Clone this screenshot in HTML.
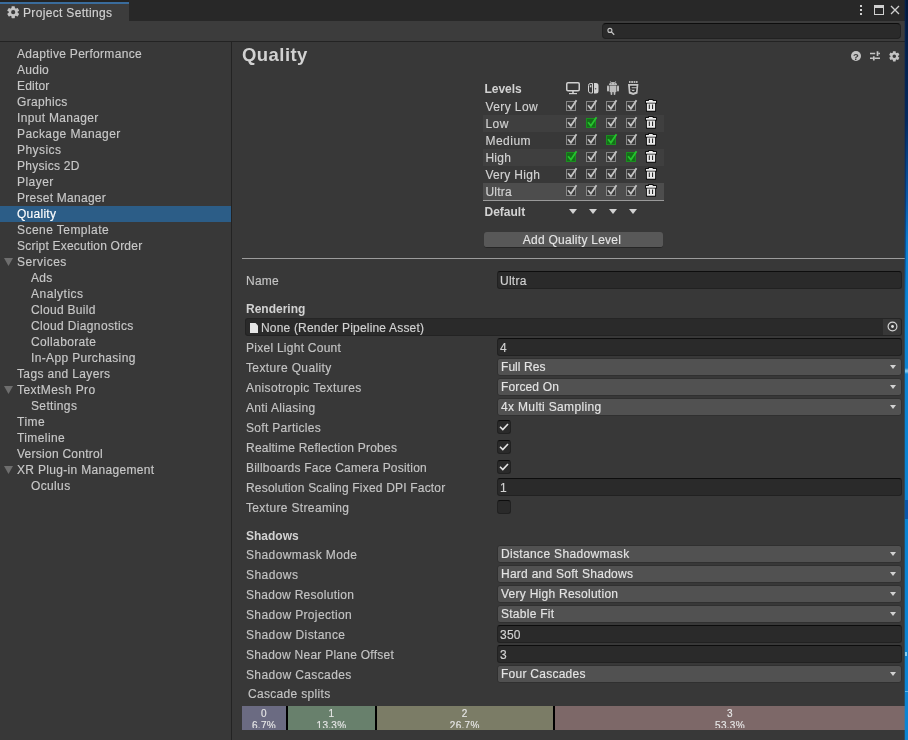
<!DOCTYPE html>
<html><head><meta charset="utf-8"><title>Project Settings</title>
<style>
html,body{margin:0;padding:0;}
body{width:908px;height:740px;overflow:hidden;background:#383838;position:relative;
 font-family:"Liberation Sans",sans-serif;font-size:12px;color:#c8c8c8;letter-spacing:0.26px;-webkit-text-stroke:0.15px currentColor;}
div,span{box-sizing:border-box;}
.abs{position:absolute;}
.t{position:absolute;white-space:nowrap;line-height:16px;height:16px;}
.b{font-weight:bold;letter-spacing:0;-webkit-text-stroke:0;}
.row{position:absolute;left:0;width:231px;height:16px;line-height:16px;white-space:nowrap;}
.lbl{position:absolute;left:246px;height:18px;line-height:18px;white-space:nowrap;color:#c4c4c4;}
.tf{position:absolute;left:497px;width:405px;height:18px;background:#2a2a2a;border:1px solid #212121;border-top-color:#0d0d0d;border-radius:3px;line-height:18px;padding-left:2px;color:#d2d2d2;white-space:nowrap;}
.dd{position:absolute;left:497px;width:405px;height:18px;background:#515151;border:1px solid #303030;border-radius:3px;line-height:17px;padding-left:3px;color:#e4e4e4;white-space:nowrap;}
.dd:after{content:"";position:absolute;right:5.2px;top:6.4px;border-left:3.8px solid transparent;border-right:3.8px solid transparent;border-top:4.5px solid #d2d2d2;}
.cb{position:absolute;left:497px;width:14px;height:14px;background:#2a2a2a;border:1px solid #212121;border-top-color:#0d0d0d;border-radius:3px;}
.cb svg{position:absolute;left:-1px;top:-1px;}
.lv{position:absolute;left:483px;width:181px;height:17px;}
.lv span{position:absolute;left:2.4px;top:1px;line-height:17px;color:#d2d2d2;}
svg{display:block;overflow:visible;}
</style></head><body><div id="win" style="position:absolute;left:0;top:0;width:908px;height:740px;will-change:transform">
<svg width="0" height="0" style="position:absolute">
<defs>
<symbol id="chk" viewBox="0 0 14 14" overflow="visible">
 <rect x="0.5" y="1.5" width="9" height="9" fill="#3a3a3a" stroke="#888888" stroke-width="1"/>
 <path d="M2.1 5.3 L4.9 8.7 L10.5 0.3" fill="none" stroke="#c4c4c4" stroke-width="1.8"/>
</symbol>
<symbol id="chkg" viewBox="0 0 14 14" overflow="visible">
 <rect x="0.5" y="1.5" width="9" height="9" fill="#146f18" stroke="#1b8f20" stroke-width="1"/>
 <path d="M2.1 5.3 L4.9 8.7 L10.5 0.3" fill="none" stroke="#27c32f" stroke-width="1.8"/>
</symbol>
<symbol id="trash" viewBox="0 0 12 13" overflow="visible">
 <path d="M1 1.8 H3.8 V0.9 H7.8 V1.8 H11 V3.9 H10.2 V11.8 H1.8 V3.9 H1 Z" fill="#0c0c0c" stroke="#0c0c0c" stroke-width="1.7" stroke-linejoin="round"/>
 <path d="M1 1.9 H3.9 V1 H7.7 V1.9 H11 V3.8 H1 Z" fill="#e9e9e9"/>
 <path d="M1.9 4.5 H10.1 V11.3 Q10.1 11.8 9.6 11.8 H2.4 Q1.9 11.8 1.9 11.3 Z" fill="#e9e9e9"/>
 <path d="M4.3 5.5 V10 M7.6 5.5 V10" stroke="#151515" stroke-width="1"/>
</symbol>
<symbol id="tri" viewBox="0 0 8 5"><path d="M0 0 H8 L4 5 Z" fill="#d2d2d2"/></symbol>
<symbol id="gear" viewBox="-6.5 -6.5 13 13" overflow="visible">
 <g fill="#c4c4c4"><rect x="-1.75" y="-6.3" width="3.5" height="3" rx="0.5" transform="rotate(0)"/><rect x="-1.75" y="-6.3" width="3.5" height="3" rx="0.5" transform="rotate(60)"/><rect x="-1.75" y="-6.3" width="3.5" height="3" rx="0.5" transform="rotate(120)"/><rect x="-1.75" y="-6.3" width="3.5" height="3" rx="0.5" transform="rotate(180)"/><rect x="-1.75" y="-6.3" width="3.5" height="3" rx="0.5" transform="rotate(240)"/><rect x="-1.75" y="-6.3" width="3.5" height="3" rx="0.5" transform="rotate(300)"/>
  <path fill-rule="evenodd" d="M-4.7,0 a4.7,4.7 0 1,0 9.4,0 a4.7,4.7 0 1,0 -9.4,0 Z M-2.2,0 a2.2,2.2 0 1,0 4.4,0 a2.2,2.2 0 1,0 -4.4,0 Z"/>
 </g>
</symbol>
</defs></svg>

<div class="abs" style="left:0;top:0;width:905px;height:21px;background:#282828"></div>
<div class="abs" style="left:0;top:0;width:129px;height:2px;background:#232323"></div>
<div class="abs" style="left:0;top:2px;width:129px;height:19px;background:#3c3c3c"></div>
<div class="abs" style="left:0;top:2px;width:129px;height:2px;background:#3a6c9c"></div>
<svg class="abs" style="left:6.8px;top:5.8px" width="12.4" height="12.4"><use href="#gear"/></svg>
<div class="t" style="left:23px;top:5px;color:#d2d2d2;letter-spacing:0.33px">Project Settings</div>
<div class="abs" style="left:860px;top:5px;width:2px;height:2px;background:#d0d0d0"></div>
<div class="abs" style="left:860px;top:9px;width:2px;height:2px;background:#d0d0d0"></div>
<div class="abs" style="left:860px;top:13px;width:2px;height:2px;background:#d0d0d0"></div>
<div class="abs" style="left:874px;top:5px;width:10px;height:10px;border:1px solid #d0d0d0;border-top-width:3px"></div>
<svg class="abs" style="left:891px;top:6px" width="8" height="8"><path d="M0 0 L8 8 M8 0 L0 8" stroke="#d0d0d0" stroke-width="1.3"/></svg>
<div class="abs" style="left:0;top:21px;width:905px;height:20px;background:#3c3c3c"></div>
<div class="abs" style="left:0;top:41px;width:905px;height:1px;background:#232323"></div>
<div class="abs" style="left:602px;top:23px;width:299px;height:16px;background:#2a2a2a;border:1px solid #212121;border-top-color:#0d0d0d;border-radius:4px"></div>
<svg class="abs" style="left:607px;top:27px" width="9" height="9"><circle cx="2.9" cy="3.4" r="2" fill="none" stroke="#c4c4c4" stroke-width="1.1"/><path d="M4.4 4.9 L7.2 7.7" stroke="#c4c4c4" stroke-width="1.3"/></svg>
<div class="abs" style="left:231px;top:42px;width:1px;height:698px;background:#232323"></div>
<div class="row" style="top:46px;"><span class="abs" style="left:17px;letter-spacing:0.31px">Adaptive Performance</span></div>
<div class="row" style="top:62px;"><span class="abs" style="left:17px">Audio</span></div>
<div class="row" style="top:78px;"><span class="abs" style="left:17px;letter-spacing:0.18px">Editor</span></div>
<div class="row" style="top:94px;"><span class="abs" style="left:17px;letter-spacing:0.33px">Graphics</span></div>
<div class="row" style="top:110px;"><span class="abs" style="left:17px;letter-spacing:0.32px">Input Manager</span></div>
<div class="row" style="top:126px;"><span class="abs" style="left:17px;letter-spacing:0.42px">Package Manager</span></div>
<div class="row" style="top:142px;"><span class="abs" style="left:17px;letter-spacing:0.43px">Physics</span></div>
<div class="row" style="top:158px;"><span class="abs" style="left:17px">Physics 2D</span></div>
<div class="row" style="top:174px;"><span class="abs" style="left:17px;letter-spacing:0.46px">Player</span></div>
<div class="row" style="top:190px;"><span class="abs" style="left:17px">Preset Manager</span></div>
<div class="row" style="top:206px;background:#2c5d87;color:#ffffff;"><span class="abs" style="left:17px">Quality</span></div>
<div class="row" style="top:222px;"><span class="abs" style="left:17px;letter-spacing:0.45px">Scene Template</span></div>
<div class="row" style="top:238px;"><span class="abs" style="left:17px;letter-spacing:0.21px">Script Execution Order</span></div>
<div class="row" style="top:254px;"><svg class="abs" style="left:4px;top:4px" width="9" height="8"><path d="M0 0 H9 L4.5 8 Z" fill="#6e6e6e"/></svg><span class="abs" style="left:17px;letter-spacing:0.47px">Services</span></div>
<div class="row" style="top:270px;"><span class="abs" style="left:31px">Ads</span></div>
<div class="row" style="top:286px;"><span class="abs" style="left:31px;letter-spacing:0.51px">Analytics</span></div>
<div class="row" style="top:302px;"><span class="abs" style="left:31px;letter-spacing:0.31px">Cloud Build</span></div>
<div class="row" style="top:318px;"><span class="abs" style="left:31px;letter-spacing:0.35px">Cloud Diagnostics</span></div>
<div class="row" style="top:334px;"><span class="abs" style="left:31px;letter-spacing:0.36px">Collaborate</span></div>
<div class="row" style="top:350px;"><span class="abs" style="left:31px;letter-spacing:0.35px">In-App Purchasing</span></div>
<div class="row" style="top:366px;"><span class="abs" style="left:17px;letter-spacing:0.36px">Tags and Layers</span></div>
<div class="row" style="top:382px;"><svg class="abs" style="left:4px;top:4px" width="9" height="8"><path d="M0 0 H9 L4.5 8 Z" fill="#6e6e6e"/></svg><span class="abs" style="left:17px;letter-spacing:0.44px">TextMesh Pro</span></div>
<div class="row" style="top:398px;"><span class="abs" style="left:31px;letter-spacing:0.36px">Settings</span></div>
<div class="row" style="top:414px;"><span class="abs" style="left:17px;letter-spacing:0.5px">Time</span></div>
<div class="row" style="top:430px;"><span class="abs" style="left:17px;letter-spacing:0.4px">Timeline</span></div>
<div class="row" style="top:446px;"><span class="abs" style="left:17px">Version Control</span></div>
<div class="row" style="top:462px;"><svg class="abs" style="left:4px;top:4px" width="9" height="8"><path d="M0 0 H9 L4.5 8 Z" fill="#6e6e6e"/></svg><span class="abs" style="left:17px;letter-spacing:0.32px">XR Plug-in Management</span></div>
<div class="row" style="top:478px;"><span class="abs" style="left:31px;letter-spacing:0.36px">Oculus</span></div>
<div class="t b" style="left:242px;top:43px;font-size:18.5px;line-height:24px;height:24px;color:#d2d2d2;letter-spacing:0.45px">Quality</div>
<svg class="abs" style="left:851px;top:50.8px" width="10" height="10"><circle cx="5" cy="5" r="5" fill="#c4c4c4"/><text x="5" y="8.6" font-size="9.5" font-weight="bold" text-anchor="middle" fill="#383838" font-family="Liberation Sans" letter-spacing="0">?</text></svg>
<svg class="abs" style="left:870px;top:51px" width="10" height="10"><path d="M0 2.6 H5.2 M8.2 2.6 H10 M0 7.2 H2.9 M4.4 7.2 H10" stroke="#c4c4c4" stroke-width="1.5"/><path d="M7.5 0.3 V4.9 M3.8 5.2 V9.6" stroke="#c4c4c4" stroke-width="1.7"/></svg>
<svg class="abs" style="left:888.6px;top:50.7px" width="10.6" height="10.6"><use href="#gear"/></svg>
<div class="t b" style="left:484.4px;top:81px;line-height:17px;height:17px;color:#d2d2d2">Levels</div>
<svg class="abs" style="left:566px;top:82px" width="14" height="13"><rect x="0.75" y="0.75" width="12.5" height="8" rx="1.2" fill="none" stroke="#d0d0d0" stroke-width="1.5"/><path d="M7 9 V11.5" stroke="#d0d0d0" stroke-width="1.6"/><path d="M3 11.6 H11" stroke="#d0d0d0" stroke-width="1.2"/></svg>
<svg class="abs" style="left:588px;top:83px" width="11" height="11"><path d="M4.5 0.5 H2.5 A2 2 0 0 0 0.5 2.5 V8 A2 2 0 0 0 2.5 10 H4.5 Z" fill="none" stroke="#d0d0d0" stroke-width="1"/><rect x="1.8" y="2.3" width="1.6" height="2" fill="#d0d0d0"/><path d="M6 0 H8 A2.5 2.5 0 0 1 10.5 2.5 V8 A2.5 2.5 0 0 1 8 10.5 H6 Z" fill="#d0d0d0"/><circle cx="7.6" cy="5.8" r="0.8" fill="#555"/></svg>
<svg class="abs" style="left:607px;top:81px" width="12" height="14"><g fill="#bcbcbc"><path d="M2 4 A4 3 0 0 1 10 4 Z"/><path d="M2.6 4.5 H9.4 V10.4 Q9.4 11.1 8.7 11.1 H3.3 Q2.6 11.1 2.6 10.4 Z"/><rect x="0" y="4.5" width="2" height="5.9" rx="0.9"/><rect x="10" y="4.5" width="2" height="5.9" rx="0.9"/><rect x="3.6" y="10.5" width="1.7" height="3.5" rx="0.8"/><rect x="6.7" y="10.5" width="1.7" height="3.5" rx="0.8"/><path d="M3.1 0 L4.1 1.7 M8.9 0 L7.9 1.7" stroke="#bcbcbc" stroke-width="0.6"/></g><circle cx="4.3" cy="2.7" r="0.45" fill="#505050"/><circle cx="7.7" cy="2.7" r="0.45" fill="#505050"/></svg>
<svg class="abs" style="left:628px;top:81px" width="11" height="14"><path d="M1 0 H2.6 V2 H1 Z M3.2 0 H5 V2 H3.2 Z M5.6 0 H7.4 V2 H5.6 Z M8 0 H9.6 V2 H8 Z" fill="#b4b4b4"/><path d="M0 2.9 H10.4 L9.5 12.4 L5.2 14 L0.9 12.4 Z" fill="#c6c6c6"/><path d="M2 4.7 H8.5 V6.2 H3.6 V7.2 H8.4 L8 10.8 L5.2 11.8 L2.4 10.8 L2.2 9 H3.8 L3.9 9.7 L5.2 10.2 L6.5 9.7 L6.7 8.7 H2.2 Z" fill="#2c2c2c"/></svg>
<div class="lv" style="top:98px;"><span style="letter-spacing:0.42px">Very Low</span>
<svg class="abs" style="left:83px;top:2px" width="14" height="14"><use href="#chk"/></svg>
<svg class="abs" style="left:103px;top:2px" width="14" height="14"><use href="#chk"/></svg>
<svg class="abs" style="left:123px;top:2px" width="14" height="14"><use href="#chk"/></svg>
<svg class="abs" style="left:143px;top:2px" width="14" height="14"><use href="#chk"/></svg>
<svg class="abs" style="left:162px;top:1px" width="12" height="13"><use href="#trash"/></svg>
</div>
<div class="lv" style="top:115px;background:#3f3f3f;"><span style="letter-spacing:0.55px">Low</span>
<svg class="abs" style="left:83px;top:2px" width="14" height="14"><use href="#chk"/></svg>
<svg class="abs" style="left:103px;top:2px" width="14" height="14"><use href="#chkg"/></svg>
<svg class="abs" style="left:123px;top:2px" width="14" height="14"><use href="#chk"/></svg>
<svg class="abs" style="left:143px;top:2px" width="14" height="14"><use href="#chk"/></svg>
<svg class="abs" style="left:162px;top:1px" width="12" height="13"><use href="#trash"/></svg>
</div>
<div class="lv" style="top:132px;"><span style="letter-spacing:0.5px">Medium</span>
<svg class="abs" style="left:83px;top:2px" width="14" height="14"><use href="#chk"/></svg>
<svg class="abs" style="left:103px;top:2px" width="14" height="14"><use href="#chk"/></svg>
<svg class="abs" style="left:123px;top:2px" width="14" height="14"><use href="#chkg"/></svg>
<svg class="abs" style="left:143px;top:2px" width="14" height="14"><use href="#chk"/></svg>
<svg class="abs" style="left:162px;top:1px" width="12" height="13"><use href="#trash"/></svg>
</div>
<div class="lv" style="top:149px;background:#3f3f3f;"><span style="letter-spacing:0.26px">High</span>
<svg class="abs" style="left:83px;top:2px" width="14" height="14"><use href="#chkg"/></svg>
<svg class="abs" style="left:103px;top:2px" width="14" height="14"><use href="#chk"/></svg>
<svg class="abs" style="left:123px;top:2px" width="14" height="14"><use href="#chk"/></svg>
<svg class="abs" style="left:143px;top:2px" width="14" height="14"><use href="#chkg"/></svg>
<svg class="abs" style="left:162px;top:1px" width="12" height="13"><use href="#trash"/></svg>
</div>
<div class="lv" style="top:166px;"><span style="letter-spacing:0.31px">Very High</span>
<svg class="abs" style="left:83px;top:2px" width="14" height="14"><use href="#chk"/></svg>
<svg class="abs" style="left:103px;top:2px" width="14" height="14"><use href="#chk"/></svg>
<svg class="abs" style="left:123px;top:2px" width="14" height="14"><use href="#chk"/></svg>
<svg class="abs" style="left:143px;top:2px" width="14" height="14"><use href="#chk"/></svg>
<svg class="abs" style="left:162px;top:1px" width="12" height="13"><use href="#trash"/></svg>
</div>
<div class="lv" style="top:183px;background:#4d4d4d;"><span style="letter-spacing:0.26px">Ultra</span>
<svg class="abs" style="left:83px;top:2px" width="14" height="14"><use href="#chk"/></svg>
<svg class="abs" style="left:103px;top:2px" width="14" height="14"><use href="#chk"/></svg>
<svg class="abs" style="left:123px;top:2px" width="14" height="14"><use href="#chk"/></svg>
<svg class="abs" style="left:143px;top:2px" width="14" height="14"><use href="#chk"/></svg>
<svg class="abs" style="left:162px;top:1px" width="12" height="13"><use href="#trash"/></svg>
</div>
<div class="abs" style="left:483px;top:200px;width:181px;height:1px;background:#9a9a9a"></div>
<div class="t b" style="left:484.5px;top:204.4px;line-height:17px;height:17px;color:#d2d2d2">Default</div>
<svg class="abs" style="left:569px;top:209px" width="8" height="5"><use href="#tri"/></svg>
<svg class="abs" style="left:589px;top:209px" width="8" height="5"><use href="#tri"/></svg>
<svg class="abs" style="left:609px;top:209px" width="8" height="5"><use href="#tri"/></svg>
<svg class="abs" style="left:629px;top:209px" width="8" height="5"><use href="#tri"/></svg>
<div class="abs" style="left:484px;top:232px;width:179px;height:16px;background:#585858;border-bottom:1px solid #262626;border-radius:3px;text-align:center;line-height:16px;color:#e4e4e4;padding-right:3px">Add Quality Level</div>
<div class="abs" style="left:242px;top:258px;width:663px;height:1px;background:#9c9c9c"></div>
<div class="lbl" style="top:272px">Name</div>
<div class="tf" style="top:271px">Ultra</div>
<div class="lbl b" style="top:300px;color:#d2d2d2">Rendering</div>
<div class="abs" style="left:245px;top:318px;width:657px;height:18px;background:#2a2a2a;border:1px solid #232323;border-top-color:#252525;border-radius:3px;line-height:18px;color:#d2d2d2;white-space:nowrap;letter-spacing:0.18px"><svg class="abs" style="left:4px;top:3.5px" width="8" height="10"><path d="M0 0 H5.5 L8 2.5 V10 H0 Z" fill="#e6e6e6"/></svg><span class="abs" style="left:15px;top:0">None (Render Pipeline Asset)</span><div class="abs" style="right:0;top:0;width:18px;height:16px;background:#373737;border-radius:0 2px 2px 0"><svg class="abs" style="left:3.5px;top:2px" width="11" height="11"><circle cx="5.5" cy="5.5" r="4.4" fill="none" stroke="#d4d4d4" stroke-width="1.2"/><circle cx="5.5" cy="5.5" r="1.4" fill="#e4e4e4"/></svg></div></div>
<div class="lbl" style="top:339px">Pixel Light Count</div>
<div class="tf" style="top:338px">4</div>
<div class="lbl" style="top:359px;letter-spacing:0.37px">Texture Quality</div>
<div class="dd" style="top:358px;letter-spacing:0.06px">Full Res</div>
<div class="lbl" style="top:379px;letter-spacing:0.39px">Anisotropic Textures</div>
<div class="dd" style="top:378px;letter-spacing:0.14px">Forced On</div>
<div class="lbl" style="top:399px;letter-spacing:0.32px">Anti Aliasing</div>
<div class="dd" style="top:398px;letter-spacing:0.34px">4x Multi Sampling</div>
<div class="lbl" style="top:419px;letter-spacing:0.32px">Soft Particles</div>
<div class="cb" style="top:420px"><svg width="14" height="14"><path d="M3 6.8 L5.8 9.6 L11 4" fill="none" stroke="#e4e4e4" stroke-width="1.6"/></svg></div>
<div class="lbl" style="top:439px;letter-spacing:0.22px">Realtime Reflection Probes</div>
<div class="cb" style="top:440px"><svg width="14" height="14"><path d="M3 6.8 L5.8 9.6 L11 4" fill="none" stroke="#e4e4e4" stroke-width="1.6"/></svg></div>
<div class="lbl" style="top:459px;letter-spacing:0.2px">Billboards Face Camera Position</div>
<div class="cb" style="top:460px"><svg width="14" height="14"><path d="M3 6.8 L5.8 9.6 L11 4" fill="none" stroke="#e4e4e4" stroke-width="1.6"/></svg></div>
<div class="lbl" style="top:479px;letter-spacing:0.19px">Resolution Scaling Fixed DPI Factor</div>
<div class="tf" style="top:478px">1</div>
<div class="lbl" style="top:499px;letter-spacing:0.35px">Texture Streaming</div>
<div class="cb" style="top:500px"></div>
<div class="lbl b" style="top:527px;color:#d2d2d2">Shadows</div>
<div class="lbl" style="top:546px;letter-spacing:0.4px">Shadowmask Mode</div>
<div class="dd" style="top:545px;letter-spacing:0.34px">Distance Shadowmask</div>
<div class="lbl" style="top:566px;letter-spacing:0.43px">Shadows</div>
<div class="dd" style="top:565px">Hard and Soft Shadows</div>
<div class="lbl" style="top:586px;letter-spacing:0.28px">Shadow Resolution</div>
<div class="dd" style="top:585px">Very High Resolution</div>
<div class="lbl" style="top:606px;letter-spacing:0.35px">Shadow Projection</div>
<div class="dd" style="top:605px">Stable Fit</div>
<div class="lbl" style="top:626px;letter-spacing:0.4px">Shadow Distance</div>
<div class="tf" style="top:625px">350</div>
<div class="lbl" style="top:646px">Shadow Near Plane Offset</div>
<div class="tf" style="top:645px">3</div>
<div class="lbl" style="top:666px;letter-spacing:0.37px">Shadow Cascades</div>
<div class="dd" style="top:665px">Four Cascades</div>
<div class="lbl" style="left:248px;top:685px;letter-spacing:0.32px">Cascade splits</div>
<div class="abs" style="left:242px;top:706px;width:663px;height:24px;background:#000;overflow:hidden"></div>
<div class="abs" style="left:242px;top:706px;width:44px;height:24px;background:#6b6b82;overflow:hidden;text-align:center;color:#e6e6e6;font-size:10px;line-height:12px;letter-spacing:0.3px"><div style="height:22px;overflow:hidden"><div style="margin-top:2px">0</div><div>6.7%</div></div></div>
<div class="abs" style="left:288px;top:706px;width:87px;height:24px;background:#68806c;overflow:hidden;text-align:center;color:#e6e6e6;font-size:10px;line-height:12px;letter-spacing:0.3px"><div style="height:22px;overflow:hidden"><div style="margin-top:2px">1</div><div>13.3%</div></div></div>
<div class="abs" style="left:377px;top:706px;width:175.5px;height:24px;background:#7b7c66;overflow:hidden;text-align:center;color:#e6e6e6;font-size:10px;line-height:12px;letter-spacing:0.3px"><div style="height:22px;overflow:hidden"><div style="margin-top:2px">2</div><div>26.7%</div></div></div>
<div class="abs" style="left:555px;top:706px;width:350px;height:24px;background:#7d6868;overflow:hidden;text-align:center;color:#e6e6e6;font-size:10px;line-height:12px;letter-spacing:0.3px"><div style="height:22px;overflow:hidden"><div style="margin-top:2px">3</div><div>53.3%</div></div></div>
<div class="abs" style="left:905px;top:0;width:1px;height:740px;background:linear-gradient(to bottom,#06214a 0px,#07285a 120px,#093a78 200px,#0a5aa6 260px,#0b78c6 300px,#0c84d2 330px,#0c84d2 740px)"></div>
<div class="abs" style="left:906px;top:0;width:2px;height:740px;background:linear-gradient(to bottom,#04193b 0px,#062a5e 120px,#0b5aa8 200px,#0c7ccc 240px,#0c84d2 262px,#0c84d2 740px)"></div>
<div class="abs" style="left:904px;top:0;width:1px;height:740px;opacity:0.28;background:linear-gradient(to bottom,#06214a 0px,#07285a 120px,#093a78 200px,#0a5aa6 260px,#0b78c6 300px,#0c84d2 330px,#0c84d2 740px)"></div>
<div class="abs" style="left:905px;top:368px;width:3px;height:6px;background:linear-gradient(to bottom,#0c84d2,#7cc6ee 40%,#7cc6ee 60%,#0c84d2)"></div>
<div class="abs" style="left:905px;top:500px;width:3px;height:19px;background:#0a57aa"></div>
<div class="abs" style="left:905px;top:652px;width:2px;height:4px;background:#86ccf0"></div>
<div class="abs" style="left:905px;top:691px;width:3px;height:1px;background:#5eb6ea"></div>
</div></body></html>
